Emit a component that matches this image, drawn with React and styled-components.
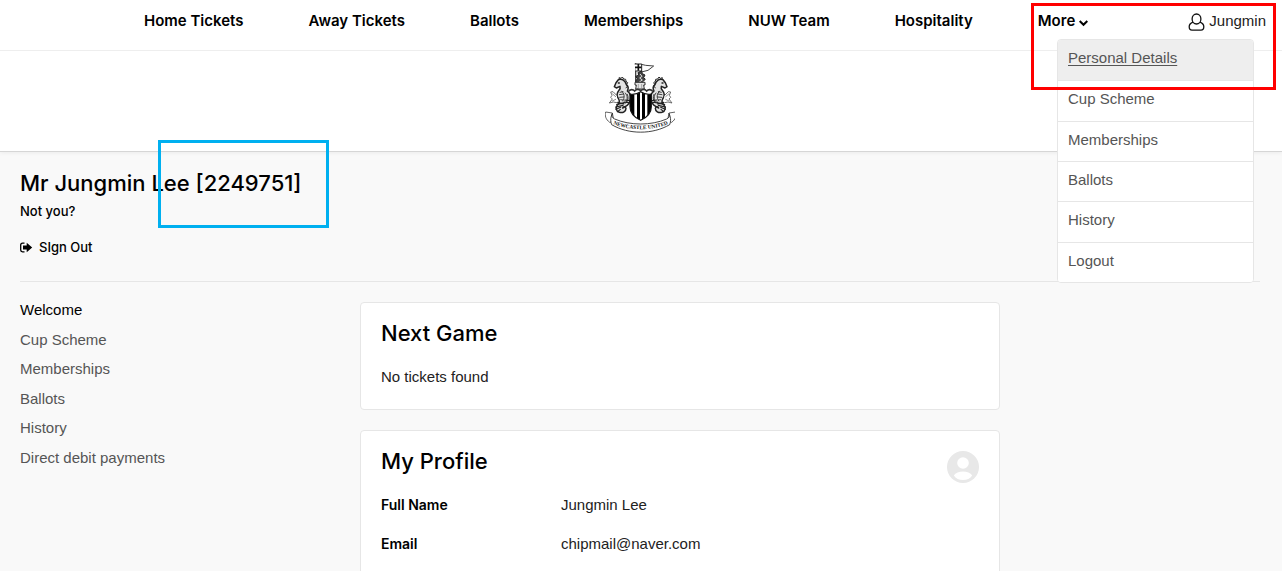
import React from "react";
import styled, { createGlobalStyle } from "styled-components";

const headingFont = `Inter, "Liberation Sans", sans-serif`;

const GlobalStyle = createGlobalStyle`
  *, *::before, *::after { box-sizing: border-box; }
  body {
    margin: 0;
    background: #f9f9f9;
    color: #222;
    font-family: "Liberation Sans", Arial, sans-serif;
    font-size: 15px;
    line-height: 20px;
  }
  h1, h2, p, ul, dl, dd { margin: 0; padding: 0; }
  ul { list-style: none; }
  a { color: inherit; text-decoration: none; }
`;

const Page = styled.div`
  position: relative;
  min-height: 100vh;
  overflow: hidden;
`;

const Header = styled.header`
  background: #fff;
  border-bottom: 1px solid #d6d6d6;
  box-shadow: 0 1px 4px rgba(0, 0, 0, 0.06);
`;

const TopBar = styled.div`
  position: relative;
  display: flex;
  justify-content: space-between;
  align-items: flex-start;
  height: 51px;
  padding: 11px 16px 0 144px;
  border-bottom: 1px solid #eee;
`;

const NavList = styled.ul`
  display: flex;
  gap: 65px;
  color: #000;
  font-family: ${headingFont};
  font-weight: 600;
`;

const NavLink = styled.a`
  white-space: nowrap;
`;

const MoreButton = styled.button`
  display: inline-flex;
  align-items: center;
  gap: 4px;
  padding: 0;
  border: 0;
  background: none;
  color: inherit;
  font: inherit;
  cursor: pointer;
`;

const UserLink = styled.a`
  display: inline-flex;
  align-items: center;
  gap: 4px;
`;

const Menu = styled.ul`
  position: absolute;
  top: 39px;
  right: 28px;
  z-index: 2;
  display: grid;
  grid-auto-rows: 1fr;
  width: 197px;
  height: 244px;
  border: 1px solid #e6e6e6;
  border-radius: 4px;
  background: #fff;
  overflow: hidden;
`;

const MenuItem = styled.li`
  background: ${(p) => (p.$active ? "#eee" : "#fff")};
  color: #555;
  & + & { border-top: 1px solid #e6e6e6; }
`;

const MenuLink = styled.a`
  display: block;
  padding: 8px 10px;
  text-decoration: ${(p) => (p.$active ? "underline" : "none")};
  text-underline-offset: 2px;
`;

const Brand = styled.div`
  display: flex;
  justify-content: center;
  max-width: 1280px;
  padding: 11px 0 17px;
`;

const BrandLink = styled.a`
  display: block;
  height: 72px;
`;

const Main = styled.main`
  max-width: 1280px;
  padding: 0 20px;
`;

const Account = styled.section`
  display: flex;
  flex-direction: column;
  align-items: flex-start;
  padding: 15px 0 24px;
  border-bottom: 1px solid #e6e6e6;
  color: #000;
  font-family: ${headingFont};
  font-size: 13px;
  font-weight: 500;
`;

const AccountName = styled.h1`
  font-size: 22px;
  line-height: 32px;
  font-weight: 500;
`;

const NotYou = styled.p`
  margin: 2px 0 16px;
`;

const SignOut = styled.button`
  display: inline-flex;
  align-items: center;
  gap: 6px;
  padding: 0;
  border: 0;
  background: none;
  color: inherit;
  font: inherit;
  cursor: pointer;
`;

const Columns = styled.div`
  display: grid;
  grid-template-columns: 340px minmax(0, 640px);
  padding-top: 20px;
`;

const SideList = styled.ul`
  display: grid;
  grid-auto-rows: 1fr;
  align-self: start;
  height: 177px;
  margin-top: -2px;
`;

const SideLink = styled.a`
  color: ${(p) => (p.$active ? "#000" : "#555")};
`;

const Cards = styled.div`
  display: flex;
  flex-direction: column;
  gap: 20px;
`;

const Card = styled.section`
  padding: 14px 20px 22px;
  border: 1px solid #e6e6e6;
  border-radius: 4px;
  background: #fff;
`;

const CardHead = styled.div`
  display: flex;
  justify-content: space-between;
  align-items: flex-start;
`;

const CardTitle = styled.h2`
  margin-bottom: 18px;
  color: #000;
  font-family: ${headingFont};
  font-size: 22px;
  line-height: 32px;
  font-weight: 500;
`;

const AvatarSlot = styled.div`
  height: 32px;
  padding-top: 6px;
`;

const Details = styled.dl`
  display: grid;
  grid-template-columns: 180px 1fr;
  row-gap: 19px;
`;

const Term = styled.dt`
  color: #000;
  font-family: ${headingFont};
  font-size: 14px;
  font-weight: 600;
`;

const Highlight = styled.div`
  position: absolute;
  z-index: 3;
  border: 3px solid ${(p) => p.$color};
  pointer-events: none;
`;

const MenuHighlight = styled(Highlight)`
  top: 3px;
  right: 6px;
  width: 245px;
  height: 87px;
`;

const NumberHighlight = styled(Highlight)`
  top: 140px;
  left: 158px;
  width: 171px;
  height: 88px;
`;

const Chevron = () => (
  <svg width="9" height="12" viewBox="0 0 9 12" fill="none" stroke="#000" strokeWidth="2" aria-hidden="true">
    <path d="M0.700 6 L4.500 9.800 L8.300 6" />
  </svg>
);

const UserIcon = () => (
  <svg width="17" height="20" viewBox="0 0 17 20" fill="none" stroke="#111" strokeWidth="1.3" aria-hidden="true">
    <ellipse cx="8.5" cy="8" rx="4.4" ry="5" />
    <path d="M5 11.100C2.600 12 1.200 13.500 1.200 15.800c0 2.100 1 3.400 2.800 3.400h9c1.800 0 2.800-1.300 2.800-3.400 0-2.300-1.400-3.800-3.800-4.700" />
  </svg>
);

const SignOutIcon = () => (
  <svg width="13" height="11" viewBox="0 0 13 11" aria-hidden="true">
    <path d="M4.500 1.200H2.500C1.300 1.200.7 1.900.7 3v5c0 1.100.6 1.800 1.800 1.800h2" fill="none" stroke="#000" strokeWidth="1.300" />
    <path d="M3 3.500h3.700V.8L12.200 5.500 6.700 10.200V7.500H3z" fill="#000" />
  </svg>
);

const Avatar = () => (
  <svg width="32" height="32" viewBox="0 0 32 32" aria-hidden="true">
    <circle cx="16" cy="16" r="16" fill="#e8e8e8" />
    <circle cx="16" cy="12" r="5.800" fill="#fff" />
    <path d="M6.800 24.500C8.500 21.700 12 20.500 16 20.500s7.500 1.200 9.200 4C23.200 27.500 20 29 16 29s-7.200-1.500-9.200-4.500z" fill="#fff" />
  </svg>
);

const Seahorse = () => (
  <g stroke="#222" strokeLinecap="round" strokeLinejoin="round">
    <path
      d="M110 98c-3-13-13-19-24-15l-7 9-5 12 6 4 11-5c2 5 0 9-4 13-6 7-6 16 0 25 4 7 2 12-3 17-8 8-5 20 5 23 11 3 20-3 20-12-1-6-9-7-10-1 8-3 18-9 22-20 5-13 0-25-8-31 4-7 3-14-3-19z"
      fill="#e4e4e4"
      strokeWidth="4.500"
    />
    <path d="M89 82l-1-5 6 2 4-4 4 6 6 1 1 6 5 4-3 5 3 6-5 4" fill="none" strokeWidth="3" />
    <path
      d="M96 117c9 9 10 19 3 30M91 121l9-2M89 128l13-2M90 136l12-1M93 143l7 1M107 123c8 10 7 20 0 31M113 127c4 9 3 18-3 25"
      fill="none"
      strokeWidth="2.500"
    />
    <path
      d="M81 158l23-6M79 165l21-5M79 172l14-6M84 151l18 5M84 179l8-7M103 150l14 2M105 144l15 2"
      fill="none"
      strokeWidth="3.500"
    />
    <path
      d="M82 131l-12-12-7 1 4 10-4 6 5 5-9 12 12-3 10 2"
      fill="#fff"
      stroke="#555"
      strokeWidth="2.500"
    />
    <path d="M78 134l-9-8M78 142l-10 5" fill="none" stroke="#555" strokeWidth="2" />
    <path d="M86 93h3" strokeWidth="4" />
  </g>
);

const Crest = () => (
  <svg width="70" height="72" viewBox="46 30 210 216" role="img" aria-label="Newcastle United crest">
    <defs>
      <clipPath id="shieldClip">
        <path d="M121 126c12 2 22 0 32-7 10 7 20 9 32 7v38c0 19-15 33-32 41-17-8-32-22-32-41z" />
      </clipPath>
      <path id="mottoLine" d="M62 212c52 26 130 26 182 0" />
    </defs>

    <path d="M138 34v66" stroke="#444" strokeWidth="4" />
    <path d="M155 37l13 3 24 2-17 13-32 8" fill="#fff" stroke="#444" strokeWidth="3" />
    <path d="M135 36h21v21h-18" fill="#fff" stroke="#222" strokeWidth="3" />
    <path d="M136 46h19M146 36v20" stroke="#111" strokeWidth="5" />
    <path d="M147 61l9-4 2 8 8 4-4 8 5 5-9 8 3 7h-17l-6-9 5-8-5-7 8-3z" fill="#444" stroke="#222" strokeWidth="3" />
    <path d="M151 66l6 7-7 5 8 6-9 6" fill="none" stroke="#ddd" strokeWidth="3" />
    <path d="M136 91h30v8h-4l2 12h-26l2-12h-4z" fill="#e4e4e4" stroke="#333" strokeWidth="3" />
    <path d="M146 96v13M156 96v13" stroke="#888" strokeWidth="2" />

    <Seahorse />
    <g transform="translate(306 0) scale(-1 1)">
      <Seahorse />
    </g>

    <path
      d="M116 119c5-9 15-7 19-2 6-7 12-6 18-1 6-5 12-6 18 1 4-5 14-7 19 2"
      fill="none"
      stroke="#333"
      strokeWidth="5"
    />
    <g clipPath="url(#shieldClip)">
      <path d="M115 112h76v98h-76z" fill="#fff" />
      <path d="M121 115h13v90h-13zM142 115h9v95h-9zM157 115h9v95h-9zM173 115h13v90h-13z" fill="#000" />
    </g>
    <path
      d="M121 126c12 2 22 0 32-7 10 7 20 9 32 7v38c0 19-15 33-32 41-17-8-32-22-32-41z"
      fill="none"
      stroke="#111"
      strokeWidth="3.500"
    />

    <path d="M68 183l-20-3c-3 11 0 22 12 31l13-2z" fill="#fff" stroke="#444" strokeWidth="2.500" />
    <path d="M238 183l20-3c3 11 0 22-12 31l-13-2z" fill="#fff" stroke="#444" strokeWidth="2.500" />
    <path
      d="M68 184c-3 8-1 13 7 17 46 20 110 20 156 0 8-4 10-9 7-17l3 8c3 10 2 18-1 26-51 30-123 30-174 0-3-8-4-16-1-26z"
      fill="#fff"
      stroke="#222"
      strokeWidth="2.500"
    />
    <text fontFamily="Liberation Serif, serif" fontSize="16" fontWeight="700" fill="#111" textAnchor="middle">
      <textPath href="#mottoLine" startOffset="50%">NEWCASTLE UNITED</textPath>
    </text>
  </svg>
);

const navItems = ["Home Tickets", "Away Tickets", "Ballots", "Memberships", "NUW Team", "Hospitality"];
const menuItems = ["Personal Details", "Cup Scheme", "Memberships", "Ballots", "History", "Logout"];
const sideItems = ["Welcome", "Cup Scheme", "Memberships", "Ballots", "History", "Direct debit payments"];
const profile = [
  ["Full Name", "Jungmin Lee"],
  ["Email", "chipmail@naver.com"],
];

export default function App() {
  return (
    <Page>
      <GlobalStyle />
      <Header>
        <TopBar>
          <nav aria-label="Main">
            <NavList>
              {navItems.map((item) => (
                <li key={item}>
                  <NavLink href="#">{item}</NavLink>
                </li>
              ))}
              <li>
                <MoreButton type="button">
                  More
                  <Chevron />
                </MoreButton>
              </li>
            </NavList>
          </nav>
          <UserLink href="#">
            <UserIcon />
            Jungmin
          </UserLink>
          <Menu>
            {menuItems.map((item, i) => (
              <MenuItem key={item} $active={i === 0}>
                <MenuLink href="#" $active={i === 0}>{item}</MenuLink>
              </MenuItem>
            ))}
          </Menu>
        </TopBar>
        <Brand>
          <BrandLink href="#">
            <Crest />
          </BrandLink>
        </Brand>
      </Header>

      <Main>
        <Account>
          <AccountName>Mr Jungmin Lee [2249751]</AccountName>
          <NotYou>Not you?</NotYou>
          <SignOut type="button">
            <SignOutIcon />
            SIgn Out
          </SignOut>
        </Account>
        <Columns>
          <nav aria-label="Account">
            <SideList>
              {sideItems.map((item, i) => (
                <li key={item}>
                  <SideLink href="#" $active={i === 0}>{item}</SideLink>
                </li>
              ))}
            </SideList>
          </nav>
          <Cards>
            <Card>
              <CardTitle>Next Game</CardTitle>
              <p>No tickets found</p>
            </Card>
            <Card>
              <CardHead>
                <CardTitle>My Profile</CardTitle>
                <AvatarSlot>
                  <Avatar />
                </AvatarSlot>
              </CardHead>
              <Details>
                {profile.map(([term, value]) => (
                  <React.Fragment key={term}>
                    <Term>{term}</Term>
                    <dd>{value}</dd>
                  </React.Fragment>
                ))}
              </Details>
            </Card>
          </Cards>
        </Columns>
      </Main>

      <MenuHighlight $color="#f00" />
      <NumberHighlight $color="#00b0f0" />
    </Page>
  );
}
